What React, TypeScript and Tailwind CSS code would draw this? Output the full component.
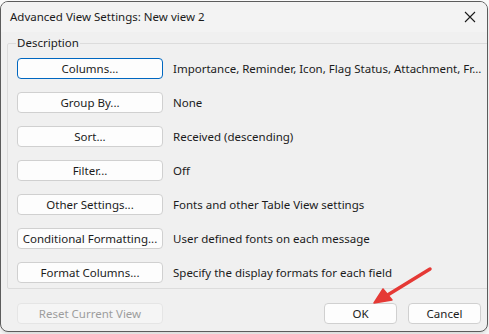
import React from 'react';

const rows = [
  { label: 'Columns...', desc: 'Importance, Reminder, Icon, Flag Status, Attachment, Fr...', focused: true },
  { label: 'Group By...', desc: 'None' },
  { label: 'Sort...', desc: 'Received (descending)' },
  { label: 'Filter...', desc: 'Off' },
  { label: 'Other Settings...', desc: 'Fonts and other Table View settings' },
  { label: 'Conditional Formatting...', desc: 'User defined fonts on each message' },
  { label: 'Format Columns...', desc: 'Specify the display formats for each field' },
];

function DialogButton({ label, focused, disabled, className = '' }: { label: string; focused?: boolean; disabled?: boolean; className?: string }) {
  const tone = disabled
    ? 'bg-[#f5f5f5] border-[#e5e5e5] text-[#9d9d9d]'
    : focused
      ? 'bg-[#fdfdfd] border-[#0067c0] text-[#1b1b1b]'
      : 'bg-[#fdfdfd] border-[#d0d0d0] text-[#1b1b1b]';
  return (
    <button className={`flex h-[21px] items-center justify-center rounded-[4px] border text-[11.5px] leading-none ${tone} ${className}`}>
      {label}
    </button>
  );
}

export default function App() {
  return (
    <div className="relative h-[334px] w-[489px] overflow-hidden bg-[#fafafa] font-['Noto_Sans',sans-serif]">
      <div className="mt-[1px] flex h-[331px] w-[488px] flex-col overflow-hidden rounded-lg border border-[#5c5c5c] bg-[#f0f0f0] shadow-md">
        {/* title bar */}
        <div className="flex h-[30px] shrink-0 items-center justify-between bg-[#f3f3f3] pl-[9px] pr-[10px]">
          <span className="text-[11.5px] text-[#1b1b1b]">Advanced View Settings: New view 2</span>
          <svg width="12" height="12" viewBox="0 0 12 12" className="mr-[1px]">
            <path d="M1 1 L11 11 M11 1 L1 11" stroke="#1b1b1b" strokeWidth="1.1" />
          </svg>
        </div>

        <div className="flex flex-1 flex-col px-[6px] pt-[4px]">
          <fieldset className="rounded-[2px] border border-[#dcdcdc] px-[9px] pb-[5px] pt-[8px]">
            <legend className="-ml-[1px] px-[1px] text-[11.5px] leading-[14px] text-[#1b1b1b]">Description</legend>
            <div className="flex flex-col gap-[13px]">
              {rows.map((r) => (
                <div key={r.label} className="flex items-center gap-[10px]">
                  <DialogButton label={r.label} focused={r.focused} className="w-[146px] shrink-0" />
                  <span className="whitespace-nowrap text-[11.5px] text-[#1b1b1b]">{r.desc}</span>
                </div>
              ))}
            </div>
          </fieldset>

          <div className="mt-[14px] flex items-center pl-[10px]">
            <DialogButton label="Reset Current View" disabled className="h-[20px] w-[146px]" />
            <div className="ml-auto flex gap-[11px]">
              <DialogButton label="OK" className="h-[20px] w-[73px]" />
              <DialogButton label="Cancel" className="h-[20px] w-[73px]" />
            </div>
          </div>
        </div>
      </div>

      {/* annotation arrow */}
      <svg className="pointer-events-none absolute left-0 top-0" width="489" height="334">
        <line x1="430" y1="269" x2="386" y2="296" stroke="#e53935" strokeWidth="3.5" strokeLinecap="round" />
        <path d="M374 303 L383 289 L392 300 Z" fill="#e53935" stroke="#e53935" strokeWidth="1.5" strokeLinejoin="round" />
      </svg>
    </div>
  );
}
